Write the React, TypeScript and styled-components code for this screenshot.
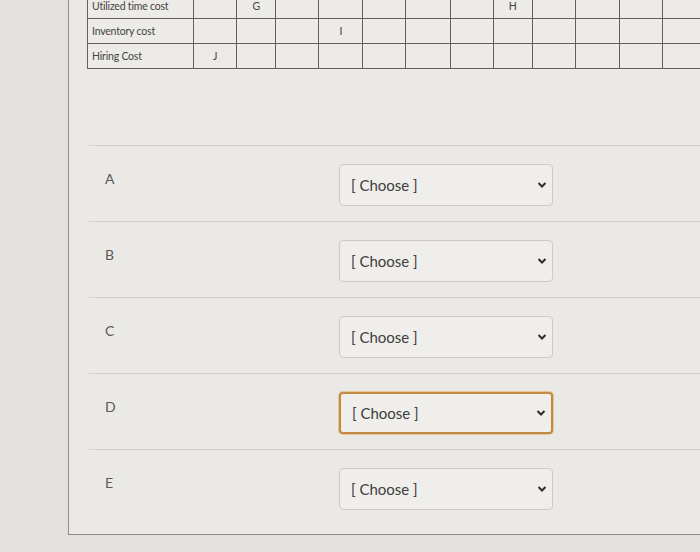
import React from "react";
import styled, { createGlobalStyle } from "styled-components";

const GlobalStyle = createGlobalStyle`
  html, body { margin: 0; padding: 0; background: #e2e1de; overflow: hidden; }
  body { font-family: Lato, "Open Sans", "Liberation Sans", sans-serif; }
`;

const Page = styled.div`
  width: 700px;
  height: 552px;
  overflow: hidden;
  padding-left: 68px;
  box-sizing: border-box;
  background: #e2e1de;
`;

const Card = styled.div`
  margin-top: -7px;
  height: 542px;
  box-sizing: border-box;
  width: 700px;
  background: #eae9e6;
  border-left: 1px solid #8e8d8a;
  border-bottom: 1px solid #8e8d8a;
  padding-left: 18px;
`;

const Table = styled.table`
  border-collapse: collapse;
  table-layout: fixed;
  width: 620px;
`;

const Col = styled.col<{ $w: number }>`
  width: ${(p) => p.$w}px;
`;

const Cell = styled.td<{ $label?: boolean }>`
  border: 1px solid #62615e;
  height: 24px;
  padding: 0 ${(p) => (p.$label ? "4px" : "0")};
  font-size: 10.5px;
  letter-spacing: -0.2px;
  color: #454441;
  text-align: ${(p) => (p.$label ? "left" : "center")};
  background: #ecebe8;
  white-space: nowrap;
`;

const List = styled.div`
  margin-top: 76px;
  margin-left: 2px;
  border-top: 1px solid #d2d1ce;
`;

const Row = styled.div<{ $last?: boolean }>`
  display: grid;
  grid-template-columns: 250px 214px;
  height: 76px;
  box-sizing: border-box;
  border-bottom: ${(p) => (p.$last ? "none" : "1px solid #d2d1ce")};
`;

const Label = styled.div`
  padding-top: 24px;
  padding-left: 16px;
  font-size: 14px;
  color: #5a5956;
`;

const Select = styled.div<{ $focus?: boolean }>`
  margin-top: 18px;
  height: 42px;
  box-sizing: border-box;
  display: flex;
  align-items: center;
  justify-content: space-between;
  padding: 0 5px 0 11px;
  background: #efeeeb;
  border-radius: 4px;
  border: ${(p) => (p.$focus ? "2px solid #c38a45" : "1px solid #cbcac7")};
  box-shadow: ${(p) => (p.$focus ? "0 0 0 1px #e6c497" : "none")};
  font-size: 15px;
  color: #3e3d3b;
`;

const Chevron = () => (
  <svg width="10" height="8" viewBox="0 0 10 8">
    <path d="M1.5 2 L5 5.5 L8.5 2" fill="none" stroke="#2e2d2b" strokeWidth="2" />
  </svg>
);

const colWidths = [106, 43, 39, 43, 44, 43, 44, 43, 39, 43, 44, 43, 44];

const rows = [
  { label: "Utilized time cost", marks: { 1: "G", 7: "H" } as Record<number, string> },
  { label: "Inventory cost", marks: { 3: "I" } as Record<number, string> },
  { label: "Hiring Cost", marks: { 0: "J" } as Record<number, string> },
];

const questions = ["A", "B", "C", "D", "E"];

export default function App() {
  return (
    <>
      <GlobalStyle />
      <Page>
        <Card>
          <Table>
            <colgroup>
              {colWidths.map((w, i) => (
                <Col key={i} $w={w} />
              ))}
            </colgroup>
            <tbody>
              {rows.map((r) => (
                <tr key={r.label}>
                  <Cell $label>{r.label}</Cell>
                  {Array.from({ length: 12 }).map((_, i) => (
                    <Cell key={i}>{r.marks[i] ?? ""}</Cell>
                  ))}
                </tr>
              ))}
            </tbody>
          </Table>
          <List>
            {questions.map((q, i) => (
              <Row key={q} $last={i === questions.length - 1}>
                <Label>{q}</Label>
                <Select $focus={q === "D"}>
                  <span>[ Choose ]</span>
                  <Chevron />
                </Select>
              </Row>
            ))}
          </List>
        </Card>
      </Page>
    </>
  );
}
